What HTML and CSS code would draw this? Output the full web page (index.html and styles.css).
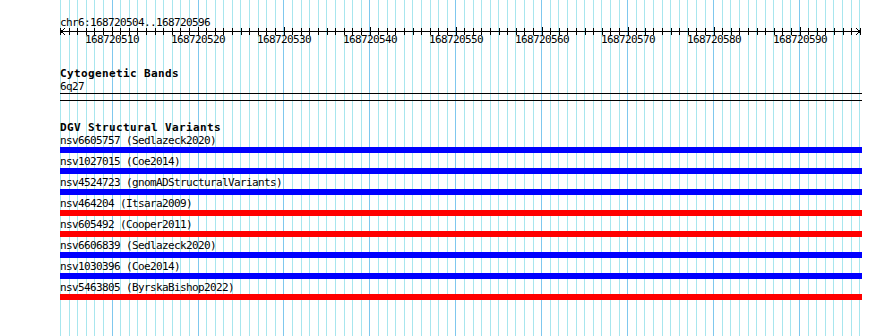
FILE: index.html
```html
<!DOCTYPE html>
<html lang="en">
<head>
    <meta charset="UTF-8">
    <title>chr6:168720504..168720596</title>
    <link rel="stylesheet" href="styles.css">
</head>
<body>
    <div class="panel">
        <div class="grid" id="grid"></div>

        <div class="tracks">
            <div class="ruler">
                <div class="ruler-title">chr6:168720504..168720596</div>
                <svg class="axis" width="802" height="10">
                    <path id="ticks" d="" stroke="#000" fill="none"/>
                </svg>
                <div class="tick-labels">
                    <span>168720510</span>
                    <span>168720520</span>
                    <span>168720530</span>
                    <span>168720540</span>
                    <span>168720550</span>
                    <span>168720560</span>
                    <span>168720570</span>
                    <span>168720580</span>
                    <span>168720590</span>
                </div>
            </div>

            <div class="track cyto">
                <div class="track-title">Cytogenetic Bands</div>
                <div class="feature-label">6q27</div>
                <div class="band"></div>
            </div>

            <div class="track">
                <div class="track-title">DGV Structural Variants</div>
                <div class="variant">
                    <div class="feature-label">nsv6605757 (Sedlazeck2020)</div>
                    <div class="bar gain"></div>
                </div>
                <div class="variant">
                    <div class="feature-label">nsv1027015 (Coe2014)</div>
                    <div class="bar gain"></div>
                </div>
                <div class="variant">
                    <div class="feature-label">nsv4524723 (gnomADStructuralVariants)</div>
                    <div class="bar gain"></div>
                </div>
                <div class="variant">
                    <div class="feature-label">nsv464204 (Itsara2009)</div>
                    <div class="bar loss"></div>
                </div>
                <div class="variant">
                    <div class="feature-label">nsv605492 (Cooper2011)</div>
                    <div class="bar loss"></div>
                </div>
                <div class="variant">
                    <div class="feature-label">nsv6606839 (Sedlazeck2020)</div>
                    <div class="bar gain"></div>
                </div>
                <div class="variant">
                    <div class="feature-label">nsv1030396 (Coe2014)</div>
                    <div class="bar gain"></div>
                </div>
                <div class="variant">
                    <div class="feature-label">nsv5463805 (ByrskaBishop2022)</div>
                    <div class="bar loss"></div>
                </div>
            </div>
        </div>
    </div>

    <script>
        const start = 168720504;
        const end = 168720596;
        const bpWidth = 8.6;

        // one grid line per base, darker every 10 bp
        const grid = document.getElementById('grid');
        for (let pos = start; pos <= end + 1; pos++) {
            const line = document.createElement('i');
            if (pos % 10 === 0) line.className = 'major';
            grid.appendChild(line);
        }

        // axis with arrows and ticks
        let d = 'M1 5.5H800M5 2L1 5.5L5 9M796 2L800 5.5L796 9';
        for (let i = 0; i <= end - start + 1; i++) {
            const x = Math.round(i * bpWidth) + 0.5;
            const top = (start + i) % 10 === 0 ? 1 : 2;
            const bottom = (start + i) % 10 === 0 ? 10 : 9;
            d += `M${x} ${top}V${bottom}`;
        }
        document.getElementById('ticks').setAttribute('d', d);
    </script>
</body>
</html>
```

FILE: styles.css
```css
body {
    margin: 0;
    background: #fff;
    color: #000;
    font-family: "DejaVu Sans Mono", monospace;
    font-size: 11px;
    letter-spacing: -0.62px;
}
.panel {
    display: grid;
    width: 890px;
    height: 336px;
    overflow: hidden;
}
.grid,
.tracks {
    grid-area: 1 / 1;
}
.grid {
    display: flex;
    padding-left: 60px;
}
.grid i {
    flex: none;
    box-sizing: border-box;
    width: 8.6px;
    border-left: 1px solid #a8e6ee;
}
.grid i.major {
    border-left-color: #7fc8ee;
}
.tracks {
    width: 802px;
    padding: 16px 0 0 60px;
}
.ruler-title,
.feature-label {
    height: 13px;
    line-height: 13px;
    white-space: nowrap;
}
.axis {
    display: block;
    margin-top: -3px;
    shape-rendering: crispEdges;
}
.tick-labels {
    display: flex;
    height: 8px;
    line-height: 8px;
    padding-left: 9px;
}
.tick-labels span {
    flex: none;
    width: 86px;
    text-align: center;
}
.track {
    margin-top: 20px;
}
.track.cyto {
    margin-top: 23px;
}
.track-title {
    height: 13px;
    line-height: 13px;
    font-weight: bold;
    letter-spacing: 0.38px;
    white-space: nowrap;
}
.band {
    box-sizing: border-box;
    width: 802px;
    height: 8px;
    border-top: 1px solid #000;
    border-bottom: 1px solid #000;
}
.variant {
    margin-bottom: 2px;
}
.bar {
    width: 802px;
    height: 6px;
}
.bar.gain {
    background: #0000ff;
}
.bar.loss {
    background: #ff0000;
}
```
